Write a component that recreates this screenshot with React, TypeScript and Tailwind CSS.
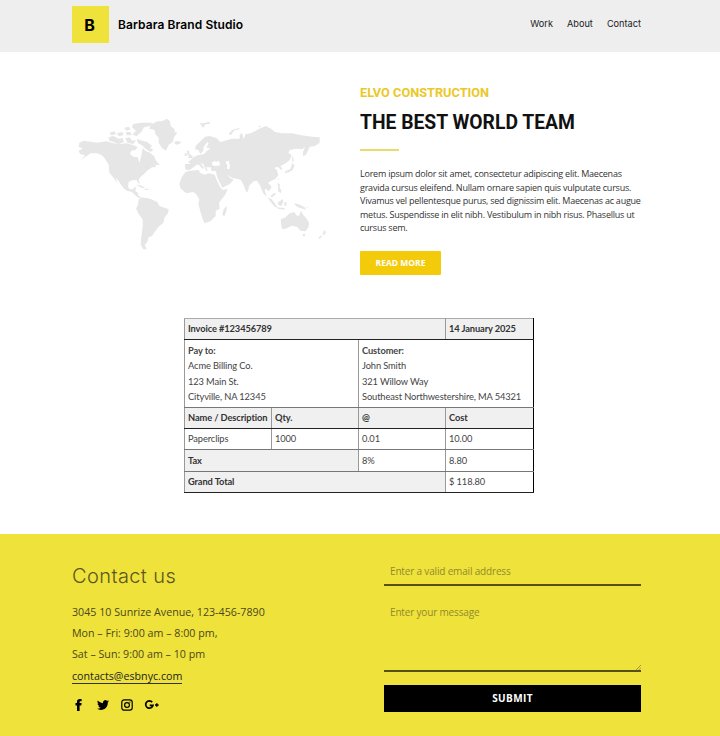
import type { ReactNode } from "react";

function WorldMap() {
  return (
    <svg viewBox="0 0 795 435" className="h-[145px] w-[265px] shrink-0" fill="#e6e6e6" aria-label="World map">
      {/* North America */}
      <path d="M28 98L40 92L62 95L80 98L110 94L130 100L150 102L170 100L190 106L203 112L196 120L184 122L180 132L190 140L203 142L208 158L213 142L216 126L218 114L228 124L240 128L252 138L258 152L270 166L256 164L258 172L246 172L234 180L222 192L212 200L206 210L210 222L204 218L200 210L186 211L176 216L174 230L180 238L190 238L192 232L198 232L196 244L204 248L204 256L214 262L206 264L194 254L186 246L170 242L158 232L148 216L136 202L144 222L134 208L128 200L118 188L116 164L106 148L96 136L80 130L62 130L50 138L32 149L46 136L30 132L26 122L38 116L26 110Z" />
      {/* Arctic archipelago */}
      <path d="M190 42L214 38L248 38L240 48L222 52L214 66L200 78L186 74L198 62L186 52ZM116 82L130 78L146 86L158 84L162 96L146 102L130 96L118 92ZM118 68L134 64L138 72L124 76ZM140 70L158 66L160 76L146 78ZM162 54L176 50L182 58L170 62ZM168 66L182 66L184 76L170 76ZM166 84L180 82L186 92L198 90L190 102L172 98ZM200 86L216 92L232 96L246 108L240 114L250 120L242 126L228 118L216 106L204 100Z" />
      {/* Greenland, Iceland, Caribbean */}
      <path d="M242 44L262 34L276 34L290 26L300 34L302 48L314 58L314 66L322 68L312 82L308 96L296 104L288 122L276 114L266 98L266 84L256 72L254 60L238 56ZM312 96L322 93L334 96L328 102L318 104ZM198 224L212 226L226 234L216 234ZM226 236L236 236L234 240L224 240Z" />
      {/* South America */}
      <path d="M206 268L216 262L240 266L262 276L268 288L296 298L294 310L284 322L280 338L266 350L254 366L246 378L236 382L232 396L224 404L230 418L220 418L212 404L214 380L218 350L218 328L206 312L198 296L204 284Z" />
      {/* Africa and Madagascar */}
      <path d="M346 186L362 182L386 180L390 188L404 194L416 190L434 194L440 210L452 234L460 240L473 236L467 252L447 278L449 296L437 302L437 318L421 334L404 340L399 330L391 304L385 282L388 268L378 252L370 246L350 250L332 236L328 222L334 204ZM457 314L461 298L471 288L469 304L463 319Z" />
      {/* Europe and Asia */}
      <path d="M345 162L346 178L358 181L372 170L380 164L386 164L398 176L402 174L392 160L400 162L409 184L413 180L407 172L422 172L424 182L438 184L441 200L457 233L479 222L491 210L481 204L471 194L487 204L503 207L513 210L521 226L529 247L534 244L537 228L551 214L561 212L571 228L579 248L590 260L584 240L587 236L597 244L605 230L594 218L601 214L616 207L625 196L621 180L613 174L623 170L633 180L637 176L631 168L647 160L659 150L665 136L655 128L659 120L679 116L697 118L705 110L699 126L699 138L707 136L715 120L719 110L735 108L749 98L749 82L725 80L695 76L665 70L637 70L615 66L603 56L587 48L565 58L543 70L527 72L521 88L516 68L509 74L509 86L485 86L465 92L451 96L439 84L419 78L405 80L389 96L377 108L375 118L385 120L391 132L400 122L401 110L412 96L416 100L409 112L421 116L409 124L403 132L384 136L372 140L362 150L354 155L362 162Z" />
      <path d="M344 130L350 130L350 138L344 138ZM351 122L358 122L358 132L369 138L366 144L353 145L358 138L352 134Z" />
      {/* Arctic coast islands */}
      <path d="M388 40L400 40L420 35L418 42L406 43L400 54L394 46ZM476 72L486 60L510 53L507 57L492 62L482 76ZM562 50L571 48L574 52Z" />
      {/* Black and Caspian seas */}
      <path fill="#ffffff" d="M426 158L434 152L438 156L446 152L451 166L438 168L426 166ZM470 154L478 152L476 160L480 164L478 178L471 176L472 166L467 158Z" />
      {/* Japan and Southeast Asia */}
      <path d="M665 136L672 150L668 158ZM666 160L674 166L668 180L658 186L644 190L646 184L660 178L664 170ZM624 204L627 206L625 212ZM623 220L629 222L629 234L634 240L632 250L625 244L624 232ZM593 262L605 268L616 282L624 294L614 290L602 276ZM622 292L645 295L643 299L624 296ZM601 258L614 248L618 252L606 262ZM623 276L630 274L638 267L640 276L634 288L625 285ZM642 278L650 276L649 288L644 288ZM674 280L686 283L704 292L708 299L694 295L684 292L674 284ZM709 291L714 290L711 294Z" />
      {/* Australia and New Zealand */}
      <path d="M632 328L647 322L659 310L673 306L679 316L687 318L693 302L699 314L710 326L717 338L716 350L707 364L691 362L681 350L665 347L651 355L639 358L634 350ZM698 372L706 372L703 380L699 378ZM762 360L768 366L764 374L758 374ZM757 374L754 382L746 388L746 382Z" />
    </svg>
  );
}

type CellProps = { children?: ReactNode; span?: number; head?: boolean; edge?: string };

function Cell({ children, span = 1, head = false, edge = "border-b-[#777]" }: CellProps) {
  return (
    <td
      colSpan={span}
      className={`border border-l-[#999] border-r-[#999] border-t-[#aaa] px-[3px] py-0 align-middle last:border-r-black ${edge} ${head ? "bg-[#f0f0f0] font-bold text-[#333]" : "text-[#444]"}`}
    >
      {children}
    </td>
  );
}

const DARK_EDGE = "border-b-[#222]";

function Invoice() {
  return (
    <table className="ml-[184px] mt-[43px] w-[350px] table-fixed border-collapse font-['Lato',sans-serif] text-[9.3px] leading-[15.5px] tracking-[-0.11px]">
      <colgroup>
        <col className="w-[87px]" />
        <col className="w-[87px]" />
        <col className="w-[87px]" />
        <col className="w-[88px]" />
      </colgroup>
      <tbody>
        <tr className="h-[21px]">
          <Cell head span={3} edge={DARK_EDGE}>Invoice #123456789</Cell>
          <Cell head edge={DARK_EDGE}>14 January 2025</Cell>
        </tr>
        <tr className="h-[68px]">
          <Cell span={2}>
            <b>Pay to:</b><br />Acme Billing Co.<br />123 Main St.<br />Cityville, NA 12345
          </Cell>
          <Cell span={2}>
            <b>Customer:</b><br />John Smith<br />321 Willow Way<br />
            <span className="whitespace-nowrap">Southeast Northwestershire, MA 54321</span>
          </Cell>
        </tr>
        <tr className="h-[21px]">
          <Cell head edge={DARK_EDGE}><span className="whitespace-nowrap">Name / Description</span></Cell>
          <Cell head edge={DARK_EDGE}>Qty.</Cell>
          <Cell head edge={DARK_EDGE}>@</Cell>
          <Cell head edge={DARK_EDGE}>Cost</Cell>
        </tr>
        <tr className="h-[21px]">
          <Cell>Paperclips</Cell>
          <Cell>1000</Cell>
          <Cell>0.01</Cell>
          <Cell>10.00</Cell>
        </tr>
        <tr className="h-[22px]">
          <Cell head span={2}>Tax</Cell>
          <Cell>8%</Cell>
          <Cell>8.80</Cell>
        </tr>
        <tr className="h-[21px]">
          <Cell head span={3} edge={DARK_EDGE}>Grand Total</Cell>
          <Cell edge={DARK_EDGE}>$ 118.80</Cell>
        </tr>
      </tbody>
    </table>
  );
}

function SocialIcons() {
  return (
    <div className="mt-[14px] flex h-[14px] items-center pl-[1px] text-black">
      <svg viewBox="0 0 12 14" className="h-[14px] w-[12px]" fill="currentColor">
        <path d="M4 13V7.5H2.5V5H4V3.6C4 1.8 5 .9 6.8 .9h1.8v2.3H7.4c-.6 0-.8.2-.8.8v1h2l-.3 2.5H6.6V13z" />
      </svg>
      <svg viewBox="0 0 24 24" className="ml-[12px] h-[12px] w-[12px]" fill="currentColor">
        <path d="M23.95 4.57a10 10 0 0 1-2.82.77 4.96 4.96 0 0 0 2.16-2.72c-.95.55-2 .95-3.13 1.18a4.92 4.92 0 0 0-8.38 4.48C7.69 8.1 4.07 6.13 1.64 3.16a4.82 4.82 0 0 0-.67 2.48c0 1.71.87 3.21 2.19 4.1a4.9 4.9 0 0 1-2.23-.62v.06a4.92 4.92 0 0 0 3.95 4.83 5 5 0 0 1-2.21.08 4.94 4.94 0 0 0 4.6 3.42A9.87 9.87 0 0 1 0 19.54a14 14 0 0 0 7.55 2.21c9.05 0 14-7.5 14-13.98l-.02-.64a9.94 9.94 0 0 0 2.42-2.56z" />
      </svg>
      <svg viewBox="0 0 12 12" className="ml-[12px] h-[12px] w-[12px]" fill="none" stroke="currentColor" strokeWidth="1.2">
        <rect x=".8" y=".8" width="10.4" height="10.4" rx="2.4" />
        <circle cx="6" cy="6" r="2.4" />
        <circle cx="8.9" cy="3.1" r=".65" fill="currentColor" stroke="none" />
      </svg>
      <svg viewBox="0 0 16 12" className="ml-[11px] h-[12px] w-[16px]" fill="none" stroke="currentColor" strokeWidth="1.7">
        <path d="M8.2 3.1A3.7 3.7 0 1 0 9 6.3H5.7" />
        <path d="M11 6h3.6M12.8 4.2v3.6" strokeWidth="1.4" />
      </svg>
    </div>
  );
}

export default function App() {
  return (
    <div className="h-[736px] w-[720px] overflow-hidden bg-white font-['Open_Sans',sans-serif]">
      <header className="flex h-[52px] items-start bg-[#eee] font-['Inter',sans-serif]">
        <div className="ml-[72px] mt-[6px] flex h-[37px] w-[37px] items-center justify-center bg-[#efe23b] pr-[2px] text-[16px] font-bold text-black">B</div>
        <div className="ml-[9px] mt-[16px] w-[200px] text-[12px] font-semibold leading-[18px] tracking-[0.09px] text-black">Barbara Brand Studio</div>
        <nav className="ml-auto mr-[79px] mt-[16px] flex gap-[14px] text-[9.2px] leading-[16px] text-[#222]">
          <span>Work</span>
          <span>About</span>
          <span>Contact</span>
        </nav>
      </header>

      <section className="flex h-[223px] items-start">
        <div className="ml-[70px] mt-[58px]"><WorldMap /></div>
        <div className="ml-[25px] mt-[33px] w-[310px]">
          <h2 className="font-['Roboto',sans-serif] text-[12.75px] font-bold leading-[16px] text-[#ebc826]">ELVO CONSTRUCTION</h2>
          <h1 className="mt-[10px] font-['Roboto',sans-serif] text-[19.3px] font-bold leading-[24px] text-[#111]">THE BEST WORLD TEAM</h1>
          <div className="mt-[14px] h-[2px] w-[39px] bg-[#ecdb6b]" />
          <p className="mt-[16px] whitespace-nowrap text-[9px] leading-[13.6px] tracking-[-0.23px] text-[#333]">
            Lorem ipsum dolor sit amet, consectetur adipiscing elit. Maecenas<br />
            gravida cursus eleifend. Nullam ornare sapien quis vulputate cursus.<br />
            Vivamus vel pellentesque purus, sed dignissim elit. Maecenas ac augue<br />
            metus. Suspendisse in elit nibh. Vestibulum in nibh risus. Phasellus ut<br />
            cursus sem.
          </p>
          <button className="mt-[16px] flex h-[24px] w-[81px] items-center justify-center rounded-[1px] bg-[#f4cb0b] text-[8.5px] font-bold text-white">READ MORE</button>
        </div>
      </section>

      <Invoice />

      <footer className="mt-[41px] flex h-[203px] items-start bg-[#efe23b] text-[#4b471c]">
        <div className="ml-[72px] mt-[29px] w-[312px]">
          <h3 className="font-['Inter',sans-serif] text-[20px] font-light leading-[26px] tracking-[0.4px] text-[#5b561f]">Contact us</h3>
          <div className="mt-[12.5px] text-[10.7px] leading-[21.4px]">
            <p>3045 10 Sunrize Avenue, 123-456-7890</p>
            <p>Mon – Fri: 9:00 am – 8:00 pm,</p>
            <p>Sat – Sun: 9:00 am – 10 pm</p>
            <a className="mt-[3px] block w-[110px] border-b border-[#333] leading-[14px] text-[#222]">contacts@esbnyc.com</a>
          </div>
          <SocialIcons />
        </div>
        <form className="mt-[24px] w-[257px]">
          <input
            placeholder="Enter a valid email address"
            className="block h-[28px] w-full border-b-2 border-[#56511c] bg-transparent px-[6px] text-[10px] tracking-[-0.17px] placeholder:text-[#928a2b]"
          />
          <div className="relative mt-[12px]">
            <textarea
              placeholder="Enter your message"
              className="block h-[74px] w-full resize-none border-b-2 border-[#56511c] bg-transparent px-[6px] pt-[7px] text-[10px] leading-[15px] tracking-[-0.17px] placeholder:text-[#928a2b]"
            />
            <svg viewBox="0 0 5 5" className="absolute bottom-[2px] right-0 h-[5px] w-[5px]" fill="none" stroke="#8a8340" strokeWidth=".8">
              <path d="M0 5L5 0M2.7 5L5 2.7" />
            </svg>
          </div>
          <button type="button" className="mt-[13px] block h-[27px] w-full bg-black text-[10px] font-bold tracking-[0.4px] text-white">SUBMIT</button>
        </form>
      </footer>
    </div>
  );
}
